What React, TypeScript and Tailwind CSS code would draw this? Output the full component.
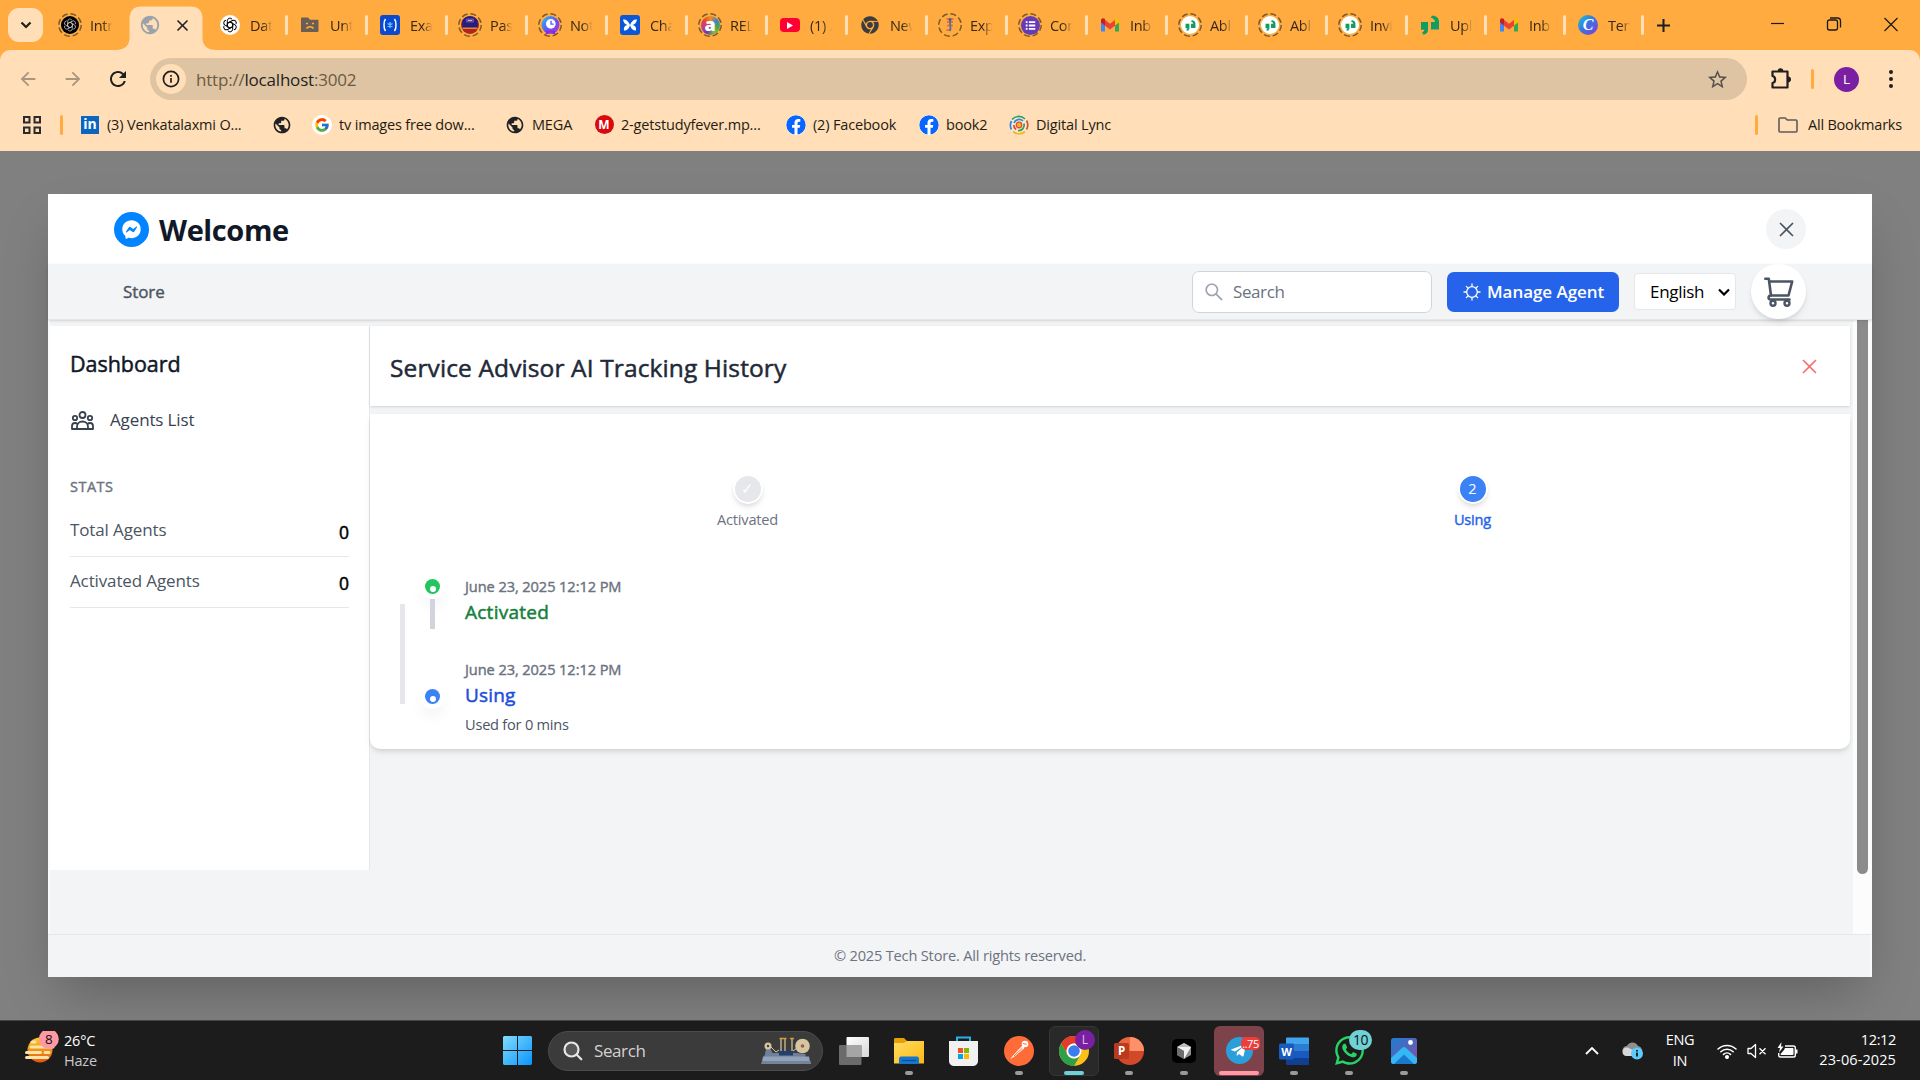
import type { ReactNode } from "react";
import { AiOutlineClose, AiOutlineSearch } from "react-icons/ai";
import { FaChrome, FaFacebook, FaFacebookMessenger, FaTelegramPlane, FaWhatsapp } from "react-icons/fa";
import { FcGoogle } from "react-icons/fc";
import { MdArrowBack, MdArrowForward, MdClose, MdPublic, MdRefresh, MdStarBorder } from "react-icons/md";

/* ---------- favicons ---------- */

function Knot({ className }: { className: string }) {
  return (
    <svg viewBox="0 0 24 24" className={className} fill="none" stroke="currentColor" strokeWidth="1.5">
      {[0, 60, 120, 180, 240, 300].map((a) => (
        <path key={a} transform={`rotate(${a} 12 12)`} d="M12 7.2 8 9.5V5.6a4 4 0 0 1 7.2-2.2M8 9.5v5" />
      ))}
    </svg>
  );
}

function Ringed({ children }: { children: ReactNode }) {
  return (
    <span className="relative flex size-6 items-center justify-center">
      <svg viewBox="0 0 24 24" className="absolute inset-0 size-6" fill="none" stroke="#7d5a2e" strokeWidth="1.5">
        <circle cx="12" cy="12" r="11.2" strokeDasharray="6 2.8" />
      </svg>
      {children}
    </span>
  );
}

function Gmail() {
  return (
    <svg viewBox="0 0 20 20" className="size-5">
      <path d="M1 4.5v12h4V7.6L1 4.5Z" fill="#4285f4" />
      <path d="M19 4.5v12h-4V7.6L19 4.5Z" fill="#34a853" />
      <path d="M4.8 4.8 10 8.800l5.200-4v5.700L10 14.600l-5.200-4.100V4.800Z" fill="#ea4335" />
      <path d="M1 5.4c0-2.300 2.200-2.900 4-1.400v6.600L1 7.600V5.400Z" fill="#c5221f" />
      <path d="M19 5.400c0-2.300-2.200-2.900-4-1.400v6.600l4-3V5.400Z" fill="#fbbc04" />
    </svg>
  );
}

function Quote({ className }: { className: string }) {
  return (
    <svg viewBox="0 0 20 20" className={className} fill="#0f9d62">
      <path d="M1 7h7v7.500c0 3-1.500 4.500-4.500 5.200l-1.500-2.200c1.600-.6 2.300-1.400 2.300-2.700H1V7Z" />
      <path d="M10.500 2.500 12.500.4C16.500.8 19 3 19 7v7.500h-8V7h4c0-2.300-1.600-3.800-4.500-4.500Z" />
    </svg>
  );
}

function QuoteCircle() {
  return (
    <Ringed>
      <span className="flex size-[18px] items-center justify-center rounded-full bg-white">
        <Quote className="size-[11px]" />
      </span>
    </Ringed>
  );
}

const intro = (
  <Ringed>
    <span className="flex size-[18px] items-center justify-center rounded-full bg-black text-[#bbb]">
      <Knot className="size-[14px]" />
    </span>
  </Ringed>
);
const chatgpt = (
  <span className="flex size-5 items-center justify-center rounded-full bg-white text-black">
    <Knot className="size-[16px]" />
  </span>
);
const sadFolder = (
  <svg viewBox="0 0 20 20" className="size-5" fill="#6a5f52">
    <path d="M2 2.500h6l2 2.200h7.500c.6 0 1 .4 1 1V16c0 .6-.4 1-1 1H2c-.6 0-1-.4-1-1V3.500c0-.6.4-1 1-1Z" />
    <path d="M6 8.500h2M12 8.500h2M6.500 13.500c1.500-2.500 5.500-2.500 7 0" stroke="#ffab40" strokeWidth="1.500" fill="none" />
  </svg>
);
const examly = (
  <svg viewBox="0 0 20 20" className="size-5">
    <rect width="20" height="20" rx="3" fill="#0a49d0" />
    <path d="M5.500 4c-2 2.500-2 9.500 0 12M14.500 4c2 2.500 2 9.500 0 12" fill="none" stroke="#fff" strokeWidth="1.500" />
    <path d="M10 7v6M7.500 8.500l5 3M12.500 8.500l-5 3" stroke="#5ec3ff" strokeWidth="1.400" />
  </svg>
);
const passport = (
  <Ringed>
    <svg viewBox="0 0 18 18" className="size-[18px]">
      <circle cx="9" cy="9" r="9" fill="#b3241c" />
      <path d="M1.300 4.500a9 9 0 0 1 15.400 0V12H1.300V4.500Z" fill="#261e7d" />
      <path d="M5 2.500h8v4H5z" fill="#5a4fb0" />
      <path d="M7 4h4v1H7z" fill="#ffb057" />
      <path d="M1.500 11.500h15V13h-15z" fill="#e8862e" />
    </svg>
  </Ringed>
);
const clock = (
  <Ringed>
    <svg viewBox="0 0 18 18" className="size-[19px]">
      <defs>
        <linearGradient id="clock" x1="0" y1="0" x2="1" y2="1">
          <stop offset="0" stopColor="#1ac9f5" />
          <stop offset=".55" stopColor="#6a4df5" />
          <stop offset="1" stopColor="#b432e6" />
        </linearGradient>
      </defs>
      <circle cx="9" cy="8.500" r="8.500" fill="url(#clock)" />
      <path d="m5 14-1 4 3-1.200L9 15l2 1.800L14 18l-1-4Z" fill="#8a2bd8" />
      <circle cx="9.300" cy="7.500" r="4.600" fill="#fff" />
      <path d="M9.500 4.500v3.200H12" stroke="#5b5cf0" strokeWidth="1.300" fill="none" />
    </svg>
  </Ringed>
);
const butterfly = (
  <svg viewBox="0 0 20 20" className="size-5">
    <rect width="20" height="20" rx="3" fill="#0b57d8" />
    <path d="M10 10C8.500 6 6 4 3 4.500c.5 3 2 5 4.500 5.500C5 10.500 3.500 12 4 15.500c3 0 5-1.500 6-5.500ZM10 10c1.500-4 4-6 7-5.500-.5 3-2 5-4.500 5.500 2.500.5 4 2 3.500 5.500-3 0-5-1.500-6-5.500Z" fill="#fff" />
  </svg>
);
const rel = (
  <Ringed>
    <span className="flex size-[19px] items-center justify-center rounded-full bg-[conic-gradient(#ef8f1d,#3b83d6,#48a948,#7ebd3f,#6a3da8,#c23a9c,#e2442f,#ef8f1d)]">
      <span className="-mt-[3px] text-[18px] leading-none font-extrabold text-white">a</span>
    </span>
  </Ringed>
);
const youtube = (
  <span className="flex h-[14px] w-5 items-center justify-center rounded-[4px] bg-[#ff0033]">
    <svg viewBox="0 0 6 7" className="h-[7px] w-[6px]" fill="#fff">
      <path d="m0 0 6 3.500L0 7Z" />
    </svg>
  </span>
);
const figure = (
  <Ringed>
    <svg viewBox="0 0 18 18" className="size-[18px]">
      <path d="M5.500 3h7M6 6h6M6 9.500h6M5.500 14h4" stroke="#f0703a" strokeWidth="2" />
      <path d="M9.500 4c-1.500 3 1 7-.5 11" stroke="#4b70a8" strokeWidth="1.800" fill="none" />
      <circle cx="9" cy="3.500" r="1.500" fill="#3d62a0" />
    </svg>
  </Ringed>
);
const forms = (
  <Ringed>
    <svg viewBox="0 0 18 18" className="size-[19px]">
      <circle cx="9" cy="9" r="9" fill="#673ab7" />
      <path d="M4.500 5.800h1.700M7.500 5.800h6M4.500 9h1.700M7.500 9h6M4.500 12.200h1.700M7.500 12.200h6" stroke="#fff" strokeWidth="1.700" />
    </svg>
  </Ringed>
);
const canva = (
  <span className="flex size-5 items-center justify-center rounded-full bg-linear-to-br from-[#0fc4cf] via-[#3a6fe0] to-[#7a2ce6]">
    <span className="-mt-px font-['Liberation_Serif',serif] text-[16px] leading-none font-bold text-white italic">C</span>
  </span>
);

const tabs: { title: string; icon: ReactNode; width?: string }[] = [
  { title: "Dat", icon: chatgpt },
  { title: "Unt", icon: sadFolder },
  { title: "Exa", icon: examly },
  { title: "Pas", icon: passport },
  { title: "Not", icon: clock },
  { title: "Cha", icon: butterfly },
  { title: "REL", icon: rel },
  { title: "(1) .", icon: youtube },
  { title: "New", icon: <FaChrome className="size-[18px] text-[#3a3c40]" /> },
  { title: "Exp", icon: figure },
  { title: "Con", icon: forms },
  { title: "Inb", icon: <Gmail /> },
  { title: "Abl", icon: <QuoteCircle /> },
  { title: "Abl", icon: <QuoteCircle /> },
  { title: "Invi", icon: <QuoteCircle /> },
  { title: "Upl", icon: <Quote className="size-5" />, width: "w-[79px]" },
  { title: "Inb", icon: <Gmail />, width: "w-[79px]" },
  { title: "Ten", icon: canva, width: "w-[78px]" },
];

function TabBody({ title, icon }: { title: string; icon: ReactNode }) {
  return (
    <>
      <span className="ml-3 flex size-6 shrink-0 items-center justify-center">{icon}</span>
      <span className="mt-px ml-2 w-[23px] overflow-hidden [mask-image:linear-gradient(to_right,black_55%,transparent_98%)] text-[14.5px] tracking-[-0.3px] whitespace-nowrap text-[#33281a]">
        {title}
      </span>
    </>
  );
}

function TabStrip() {
  return (
    <div className="flex h-[50px] items-center bg-[#ffab40]">
      <div className="ml-2 flex h-[34px] w-[35px] items-center justify-center rounded-[11px] bg-[#ffdeb8]">
        <svg viewBox="0 0 12 8" className="h-2 w-3" fill="none" stroke="#1f1f1f" strokeWidth="2.200">
          <path d="m1.500 1.500 4.500 4.500 4.500-4.500" />
        </svg>
      </div>
      <div className="ml-[3px] flex w-20 items-center">
        <TabBody title="Intr" icon={intro} />
      </div>
      <div className="flex h-[50px] w-20 items-end">
        <svg viewBox="0 0 100 44" className="-mx-[10px] h-11 w-[100px] shrink-0" fill="#ffdeb8">
          <path d="M0 44c8 0 13.500-4 13.500-12V13c0-8 4-12.500 12-12.500h49c8 0 12 4.500 12 12.500v19c0 8 5.500 12 13.500 12Z" />
        </svg>
        <div className="-ml-20 flex h-[50px] w-20 shrink-0 items-center">
          <MdPublic className="relative ml-[13px] size-[22px] shrink-0 text-[#9aa3ab]" />
          <MdClose className="relative ml-[12px] size-[19px] shrink-0 stroke-[#1f1f1f] text-[#1f1f1f]" />
        </div>
      </div>
      {tabs.map((t, i) => (
        <div key={i} className={`flex shrink-0 items-center ${t.width ?? "w-20"}`}>
          <TabBody title={t.title} icon={t.icon} />
          <span className="-mr-[2px] ml-auto h-5 w-[3px] shrink-0 rounded-full bg-[#ffdeb8]" />
        </div>
      ))}
      <svg viewBox="0 0 14 14" className="ml-[15px] size-[13px]" stroke="#1f1f1f" strokeWidth="2.200">
        <path d="M7 0v14M0 7h14" />
      </svg>
      <div className="ml-auto flex w-[171px] shrink-0 text-[#1a1a1a]">
        <svg viewBox="0 0 57 50" className="h-[50px] w-[57px]" stroke="currentColor" strokeWidth="1.200">
          <path d="M22 23.500h13" />
        </svg>
        <svg viewBox="0 0 57 50" className="h-[50px] w-[57px]" fill="none" stroke="currentColor" strokeWidth="1.300">
          <rect x="21.500" y="20" width="10" height="10" rx="2" />
          <path d="M24 18h7.500a3 3 0 0 1 3 3V27.500" />
        </svg>
        <svg viewBox="0 0 57 50" className="h-[50px] w-[57px]" stroke="currentColor" strokeWidth="1.200">
          <path d="m21.500 18 13 13M34.500 18l-13 13" />
        </svg>
      </div>
    </div>
  );
}

function AddressRow() {
  return (
    <div className="flex h-[58px] items-center rounded-t-[10px] bg-[#ffdeb8]">
      <MdArrowBack className="ml-[17px] size-[22px] text-[#a9967d]" />
      <MdArrowForward className="ml-[23px] size-[22px] text-[#a9967d]" />
      <MdRefresh className="ml-[22px] size-[24px] text-[#1f1f1f]" />
      <div className="ml-[20px] flex h-[42px] w-[1597px] items-center rounded-full bg-[#dec4a2]">
        <span className="ml-[6px] flex size-[30px] items-center justify-center rounded-full bg-[#ffdeb8]">
          <svg viewBox="0 0 18 18" className="size-[18px]" fill="none" stroke="#1f1f1f" strokeWidth="1.700">
            <circle cx="9" cy="9" r="7.600" />
            <path d="M9 8v4.800M9 5v1.700" />
          </svg>
        </span>
        <span className="mt-px ml-[10px] text-[17px] tracking-[-0.200px] whitespace-nowrap text-[#6b5a45]">
          http://<span className="text-[#1f1f1f]">localhost</span>:3002
        </span>
        <MdStarBorder className="mr-[18px] ml-auto size-[23px] text-[#55524e]" />
      </div>
      <svg viewBox="0 0 24 24" className="ml-[22px] size-6" fill="none" stroke="#1f1f1f" strokeWidth="2.200" strokeLinejoin="round">
        <path d="M3.500 4.500H18.500V20.500H3.500V16c3.500-.6 3.500-6.400 0-7Z" />
        <path d="M9.500 4a2 2 0 0 1 4 0M19 10.300a2.200 2.200 0 0 1 0 4.400" fill="#1f1f1f" stroke="#1f1f1f" strokeWidth="1.600" />
      </svg>
      <span className="ml-[18px] h-5 w-[3px] rounded-full bg-[#ffab40]" />
      <span className="ml-5 flex size-[25px] items-center justify-center rounded-full bg-[#7b1fa2] text-[13.500px] text-white">L</span>
      <svg viewBox="0 0 4 18" className="ml-[30px] h-[18px] w-1" fill="#1f1f1f">
        <circle cx="2" cy="2" r="2" />
        <circle cx="2" cy="9" r="2" />
        <circle cx="2" cy="16" r="2" />
      </svg>
    </div>
  );
}

function Bookmark({ icon, label, className }: { icon: ReactNode; label?: string; className: string }) {
  return (
    <div className={`flex shrink-0 items-center ${className}`}>
      <span className="flex size-5 shrink-0 items-center justify-center">{icon}</span>
      {label && <span className="ml-[7px] text-[14.500px] tracking-[-0.170px] whitespace-nowrap text-[#241c12]">{label}</span>}
    </div>
  );
}

function BookmarkRow() {
  return (
    <div className="flex h-[43px] items-center bg-[#ffdeb8] pb-[10px]">
      <svg viewBox="0 0 18 18" className="ml-[23px] size-[18px]" fill="none" stroke="#2b2b2b" strokeWidth="2">
        <path d="M1 1h5.500v5.500H1ZM11.500 1H17v5.500h-5.500ZM1 11.500h5.500V17H1ZM11.500 11.500H17V17h-5.500Z" />
      </svg>
      <span className="ml-[19px] h-5 w-[3px] rounded-full bg-[#ffab40]" />
      <Bookmark
        className="ml-[17px] w-[192px]"
        label="(3) Venkatalaxmi O..."
        icon={<span className="flex size-[18px] items-center justify-center bg-[#0a66c2] pb-px text-[14px] leading-none font-bold text-white">in</span>}
      />
      <Bookmark className="w-10" icon={<MdPublic className="size-[22px] text-[#202124]" />} />
      <Bookmark
        className="w-[193px]"
        label="tv images free dow..."
        icon={
          <span className="flex size-5 items-center justify-center rounded-full bg-white">
            <FcGoogle className="size-4" />
          </span>
        }
      />
      <Bookmark className="w-[89px]" label="MEGA" icon={<MdPublic className="size-[22px] text-[#202124]" />} />
      <Bookmark
        className="w-[192px]"
        label="2-getstudyfever.mp..."
        icon={<span className="flex size-[19px] items-center justify-center rounded-full bg-[#d9090f] text-[12px] font-bold text-white">M</span>}
      />
      <Bookmark className="w-[133px]" label="(2) Facebook" icon={<FaFacebook className="size-5 rounded-full bg-white text-[#0866ff]" />} />
      <Bookmark className="w-[90px]" label="book2" icon={<FaFacebook className="size-5 rounded-full bg-white text-[#0866ff]" />} />
      <Bookmark
        className="w-[110px]"
        label="Digital Lync"
        icon={
          <svg viewBox="0 0 20 20" className="size-5" fill="none" strokeWidth="1.700">
            <circle cx="10" cy="10" r="10" fill="#f7e9cf" />
            <path d="M3 4.500a9 9 0 0 1 13-.5" stroke="#2f9e57" />
            <path d="M17.500 5.500a9 9 0 0 1 0 9" stroke="#e5433d" />
            <path d="M16 16.500a9 9 0 0 1-12 0" stroke="#f4b51e" />
            <path d="M2.500 14.500a9 9 0 0 1 0-8.500" stroke="#3187d6" />
            <path d="M5 8a5.500 5.500 0 0 1 9-2" stroke="#3187d6" />
            <path d="M15 8.500a5.500 5.500 0 0 1-6 7" stroke="#2f9e57" />
            <path d="M7 14.500A5.500 5.500 0 0 1 4.800 10" stroke="#e5433d" />
            <circle cx="10" cy="10" r="2.800" fill="#f4b51e" stroke="#e5433d" strokeWidth="1.200" />
          </svg>
        }
      />
      <span className="mr-5 ml-auto h-5 w-[3px] shrink-0 rounded-full bg-[#ffab40]" />
      <svg viewBox="0 0 20 16" className="h-4 w-5 shrink-0" fill="none" stroke="#5c5c5c" strokeWidth="1.600" strokeLinejoin="round">
        <path d="M1 2.200C1 1.500 1.500 1 2.200 1h5l2 2h8.600c.7 0 1.200.5 1.200 1.200v9.600c0 .7-.5 1.200-1.200 1.200H2.200C1.500 15 1 14.500 1 13.800Z" />
      </svg>
      <span className="mr-[18px] ml-[10px] text-[14.500px] tracking-[-0.200px] whitespace-nowrap text-[#241c12]">All Bookmarks</span>
    </div>
  );
}

/* ---------- store window ---------- */

function GearIcon() {
  return (
    <svg viewBox="0 0 18 18" className="size-[18px]" fill="none" stroke="currentColor" strokeWidth="1.300" strokeLinecap="round">
      <circle cx="9" cy="9" r="5.300" />
      {[0, 45, 90, 135, 180, 225, 270, 315].map((a) => (
        <path key={a} d="M9 3.200V1" transform={`rotate(${a} 9 9)`} />
      ))}
    </svg>
  );
}

function PeopleIcon() {
  return (
    <svg viewBox="0 0 23 19" className="h-[19px] w-[23px]" fill="none" stroke="currentColor" strokeWidth="1.800" strokeLinejoin="round">
      <circle cx="11.500" cy="4" r="3" />
      <circle cx="4" cy="7" r="2.200" />
      <circle cx="19" cy="7" r="2.200" />
      <path d="M6 18v-2.200c0-3.200 2.400-5.300 5.500-5.300s5.500 2.100 5.500 5.300V18Z" />
      <path d="M6 18H1v-2.800c0-2 1.300-3.200 3-3.200 1 0 1.900.4 2.500 1.100M17 18h5v-2.800c0-2-1.300-3.200-3-3.200-1 0-1.900.4-2.500 1.100" />
    </svg>
  );
}

function CartIcon() {
  return (
    <svg viewBox="0 0 30 30" className="size-[30px]" fill="none" stroke="currentColor" strokeWidth="2.600" strokeLinejoin="round" strokeLinecap="round">
      <path d="M1.300 1.800h3.500L7 18.500" />
      <path d="M5.300 4.500h22.900l-3.700 14H7c-3 0-3.300 4-.5 4h19" />
      <circle cx="9" cy="26.300" r="2.500" strokeWidth="2.400" />
      <circle cx="23" cy="26.300" r="2.500" strokeWidth="2.400" />
    </svg>
  );
}

function Header() {
  return (
    <header className="flex h-[70px] shrink-0 items-center justify-between bg-white pr-[66px] pl-[66px]">
      <div className="flex items-center">
        <span className="flex size-[35px] items-center justify-center rounded-full bg-[#0084ff] text-white">
          <FaFacebookMessenger className="size-[19px]" />
        </span>
        <h1 className="ml-[10px] text-[29px] leading-none font-bold tracking-[-0.400px] text-[#111827]">Welcome</h1>
      </div>
      <button className="flex size-10 items-center justify-center rounded-full bg-[#f3f4f6] text-[#4b5563]">
        <AiOutlineClose className="size-[21px]" />
      </button>
    </header>
  );
}

function NavBar() {
  return (
    <nav className="relative z-10 flex h-[56px] shrink-0 items-center border-b border-[#e5e7eb] bg-[#f3f4f6] pr-[66px] pl-[75px] shadow-sm">
      <a className="text-[17px] [-webkit-text-stroke:0.4px] tracking-[-0.100px] text-[#4b5563]">Store</a>
      <div className="ml-auto flex h-[42px] w-[240px] items-center rounded-[7px] border border-[#d1d5db] bg-white">
        <AiOutlineSearch className="ml-[10px] size-[22px] text-[#9ca3af]" />
        <span className="mt-px ml-[8px] text-[17px] tracking-[-0.400px] text-[#6b7280]">Search</span>
      </div>
      <button className="ml-[15px] flex h-10 w-[172px] items-center rounded-[7px] bg-[#2563eb] text-white">
        <span className="ml-4">
          <GearIcon />
        </span>
        <span className="mt-px ml-[6px] text-[17px] font-semibold tracking-[-0.050px] whitespace-nowrap">Manage Agent</span>
      </button>
      <div className="ml-[15px] flex h-[37px] w-[102px] items-center rounded-[4px] border border-[#e5e7eb] bg-white">
        <span className="mt-px ml-[15px] text-[17px] tracking-[-0.300px] text-black">English</span>
        <svg viewBox="0 0 12 8" className="ml-[14px] h-[8px] w-[12px]" fill="none" stroke="#000" strokeWidth="2.200">
          <path d="m1 1.500 5 5 5-5" />
        </svg>
      </div>
      <button className="ml-[15px] flex size-[55px] items-center justify-center rounded-full bg-white text-[#4b5563] shadow-md">
        <CartIcon />
      </button>
    </nav>
  );
}

function Stat({ label, value }: { label: string; value: string }) {
  return (
    <div className="flex h-[51px] items-center justify-between border-b border-[#e5e7eb]">
      <span className="-mt-[2px] text-[17px] tracking-[-0.130px] text-[#4b5563]">{label}</span>
      <span className="mt-[2px] text-[17.500px] [-webkit-text-stroke:0.5px] text-black">{value}</span>
    </div>
  );
}

function Sidebar() {
  return (
    <aside className="h-[544px] w-[320px] shrink-0 border-r border-[#e5e7eb] bg-white pr-[20px] pl-5">
      <h2 className="pt-[25px] text-[21.500px] leading-[26px] [-webkit-text-stroke:0.5px] tracking-[-0.050px] text-[#111827]">Dashboard</h2>
      <div className="mt-[30px] flex h-[26px] items-center pl-px text-[#374151]">
        <PeopleIcon />
        <span className="ml-[16px] text-[17px] tracking-[-0.130px]">Agents List</span>
      </div>
      <h3 className="mt-[44px] text-[14.500px] leading-[20px] [-webkit-text-stroke:0.4px] tracking-[0.500px] text-[#6b7280]">STATS</h3>
      <div className="mt-[9px]">
        <Stat label="Total Agents" value="0" />
        <Stat label="Activated Agents" value="0" />
      </div>
    </aside>
  );
}

function Step({ mark, label, circle, text }: { mark: string; label: string; circle: string; text: string }) {
  return (
    <div className="flex flex-1 flex-col items-center">
      <span className={`flex size-[30px] items-center justify-center rounded-full border-2 border-white text-[14.500px] text-white shadow-md ${circle}`}>
        {mark}
      </span>
      <span className={`mt-[5px] text-[14.600px] leading-5 tracking-[-0.200px] ${text}`}>{label}</span>
    </div>
  );
}

function TimelineDot({ color }: { color: string }) {
  return (
    <span className="flex size-[25px] items-center justify-center rounded-full bg-white shadow-[0_10px_15px_-3px_rgba(0,0,0,0.06)]">
      <span className={`flex size-[15px] items-center justify-center rounded-full ${color}`}>
        <span className="mt-[4px] size-[6px] rounded-full bg-white" />
      </span>
    </span>
  );
}

function TimelineDate() {
  return (
    <time className="text-[14.600px] leading-5 [-webkit-text-stroke:0.4px] tracking-[-0.080px] text-[#6b7280]">June 23, 2025 12:12 PM</time>
  );
}

function TrackingCard() {
  return (
    <section className="mt-[8px] h-[335px] rounded-b-[10px] bg-white pt-[60px] shadow-md">
      <div className="flex px-[15px]">
        <Step mark="✓" label="Activated" circle="bg-[#e5e7eb]" text="text-[#6b7280]" />
        <Step mark="2" label="Using" circle="bg-[#3b82f6]" text="text-[#2563eb] [-webkit-text-stroke:0.4px]" />
      </div>
      <div className="mt-[45px] flex pl-[30px]">
        <span className="mt-[30px] h-[100px] w-[5px] bg-[#e5e7eb]" />
        <div className="ml-[15px] flex w-[25px] flex-col items-center">
          <TimelineDot color="bg-[#22c55e]" />
          <span className="h-[30px] w-[5px] bg-[#d1d5db]" />
          <span className="h-[55px]" />
          <TimelineDot color="bg-[#3b82f6]" />
        </div>
        <div className="ml-[20px] flex flex-col pt-[2px]">
          <TimelineDate />
          <h4 className="mt-[4px] mb-[35px] text-[19px] leading-6 [-webkit-text-stroke:0.5px] tracking-[0.250px] text-[#15803d]">Activated</h4>
          <TimelineDate />
          <h4 className="mt-[4px] text-[19px] leading-6 [-webkit-text-stroke:0.5px] tracking-[0.150px] text-[#1d4ed8]">Using</h4>
          <p className="mt-[7px] text-[14.600px] leading-5 tracking-[-0.230px] text-[#4b5563]">Used for 0 mins</p>
        </div>
      </div>
    </section>
  );
}

function StoreWindow() {
  return (
    <div className="flex h-[783px] w-[1824px] flex-col bg-[#f3f4f6] shadow-2xl">
      <Header />
      <NavBar />
      <div className="flex h-[614px] shrink-0">
        <div className="flex w-[1805px] border-l-2 border-[#f9fafb] pt-[6px] pr-[3px]">
          <Sidebar />
          <main className="flex-1">
            <div className="flex h-20 items-center justify-between bg-white pr-[30px] pl-[20px] shadow-sm">
              <h2 className="mt-1 text-[24.500px] [-webkit-text-stroke:0.5px] tracking-[0.120px] whitespace-nowrap text-[#1f2937]">
                Service Advisor AI Tracking History
              </h2>
              <AiOutlineClose className="mt-px size-[21px] text-[#f87171]" />
            </div>
            <TrackingCard />
          </main>
        </div>
        <div className="w-[19px] bg-[#fcfcfc] pl-1">
          <div className="h-[554px] w-[11px] rounded-b-full bg-[#8b8b8b]" />
        </div>
      </div>
      <footer className="flex h-[43px] items-center justify-center border-t border-r-2 border-t-[#e5e7eb] border-r-[#f9fafb] pl-[2px] text-[14.600px] tracking-[-0.180px] text-[#6b7280]">
        © 2025 Tech Store. All rights reserved.
      </footer>
    </div>
  );
}

/* ---------- taskbar ---------- */

function TaskApp({ children, indicator = "bg-[#9a9a9a] w-2", tile = "" }: { children: ReactNode; indicator?: string; tile?: string }) {
  return (
    <div className={`relative mr-[5px] flex size-[50px] shrink-0 items-center justify-center rounded-[6px] ${tile}`}>
      {children}
      <span className={`absolute bottom-[1px] left-1/2 h-1 -translate-x-1/2 rounded-full ${indicator}`} />
    </div>
  );
}

function Weather() {
  return (
    <div className="flex w-[503px] shrink-0 items-center">
      <svg viewBox="0 0 36 40" className="ml-6 h-10 w-9 shrink-0">
        <defs>
          <linearGradient id="sun" x1="0" y1="0" x2="0" y2="1">
            <stop offset="0" stopColor="#ffce1f" />
            <stop offset="1" stopColor="#e2560c" />
          </linearGradient>
        </defs>
        <circle cx="16" cy="19" r="12.500" fill="url(#sun)" />
        <path d="M8 11h3M7 16h22M2.500 21.500h14M21 21.500h4M2.500 26.500h21" stroke="#fbe3ab" strokeWidth="3" strokeLinecap="round" />
        <circle cx="24.800" cy="8" r="10" fill="#ff99a4" />
        <text x="24.800" y="13" textAnchor="middle" fontSize="13.500" fill="#111">8</text>
      </svg>
      <div className="ml-[4px] flex flex-col text-[14.500px] leading-5 tracking-[-0.200px]">
        <span className="text-white">26°C</span>
        <span className="text-[#c8c8c8]">Haze</span>
      </div>
    </div>
  );
}

function SearchPill() {
  return (
    <div className="ml-4 flex h-10 w-[275px] shrink-0 items-center rounded-full border border-[#4c4c4c] bg-[#3b3b3b]">
      <svg viewBox="0 0 20 20" className="ml-[14px] size-5" fill="none" stroke="#e6e6e6" strokeWidth="2.200" strokeLinecap="round">
        <circle cx="8.500" cy="8.500" r="7" fill="#575757" />
        <path d="m13.800 13.800 4.500 4.500" />
      </svg>
      <span className="ml-[11px] text-[17px] tracking-[-0.400px] text-[#d2d2d2]">Search</span>
      <svg viewBox="0 0 50 28" className="mr-[11px] ml-auto h-7 w-[50px]">
        <path d="M4 17 5.500 9l3 1 3 6h24l9 1v3H3Z" fill="#6f809b" />
        <path d="M2 19.500h46l1.500 7.500H.5Z" fill="#93a2b8" />
        <path d="M1 24h48.500l.5 3H.5Z" fill="#73849d" />
        <path d="M18 13.500h14v5H18Z" fill="#24406b" />
        <path d="M20 2v12M24 2v12M31 2v12" stroke="#c9b58d" strokeWidth="1.400" />
        <path d="M18.500 1.500h7M29 1.500h4" stroke="#d59a3a" strokeWidth="1.500" />
        <circle cx="41.500" cy="9" r="7.300" fill="#d8c59f" />
        <circle cx="41.500" cy="9" r="1.800" fill="#8f5d52" />
        <circle cx="7" cy="9" r="3.500" fill="#d8c59f" />
        <circle cx="7" cy="9" r="1.200" fill="#4a3b2c" />
        <path d="m10 10 5 5 3-2M32 14l4-3" stroke="#d8c59f" strokeWidth="1" fill="none" />
      </svg>
    </div>
  );
}

function Taskbar() {
  return (
    <div className="flex h-[60px] items-center border-t border-[#454545] bg-[#1c1c1c]">
      <Weather />
      <svg viewBox="0 0 29 29" className="size-[29px] shrink-0">
        <defs>
          <linearGradient id="win" x1="0" y1="0" x2="1" y2="1">
            <stop offset="0" stopColor="#80dcff" />
            <stop offset="1" stopColor="#0a94fb" />
          </linearGradient>
        </defs>
        <path d="M1 0h13v14H0V1ZM15 0h13l1 1v13H15ZM0 15h14v14H1l-1-1ZM15 15h14v13l-1 1H15Z" fill="url(#win)" />
      </svg>
      <SearchPill />
      <div className="ml-[6px] flex shrink-0">
        <TaskApp indicator="hidden">
          <svg viewBox="0 0 30 30" className="size-[30px]">
            <defs>
              <linearGradient id="tv" x1="0" y1="0" x2="1" y2="1">
                <stop offset="0" stopColor="#fff" />
                <stop offset="1" stopColor="#d8d8d8" />
              </linearGradient>
            </defs>
            <rect x="7.500" y="1" width="22.500" height="20" rx="1" fill="url(#tv)" />
            <rect x="0" y="9" width="22.500" height="20" rx="1" fill="#6b6b6b" />
            <path d="M7.500 9h15v12h-15Z" fill="#a5a5a5" />
          </svg>
        </TaskApp>
        <TaskApp>
          <svg viewBox="0 0 30 28" className="h-7 w-[30px]">
            <defs>
              <linearGradient id="folder" x1="0" y1="0" x2="1" y2="1">
                <stop offset="0" stopColor="#ffdc63" />
                <stop offset="1" stopColor="#fbb912" />
              </linearGradient>
            </defs>
            <path d="M0 2.500C0 1.500.7 1 1.500 1H10l3 3v4H0Z" fill="#e3a008" />
            <path d="M0 6h10l3-2h17v22.500H0Z" fill="url(#folder)" />
            <path d="M5 27V21.500c0-1 .8-2 2-2h16c1.200 0 2 1 2 2V27Z" fill="#1576cf" />
            <path d="M8 23.500h14" stroke="#0b4d94" strokeWidth="1.200" />
          </svg>
        </TaskApp>
        <TaskApp indicator="hidden">
          <svg viewBox="0 0 29 30" className="mr-px h-[30px] w-[29px]">
            <path d="M8 6V1.500h13V6" fill="none" stroke="#27b1ea" strokeWidth="2" />
            <path d="M0 5h29v20c0 2.800-2.200 5-5 5H5c-2.800 0-5-2.200-5-5Z" fill="#f1f1f1" />
            <path d="M9 12h5v5H9Z" fill="#f25022" />
            <path d="M15 12h5v5h-5Z" fill="#7fba00" />
            <path d="M9 18h5v5H9Z" fill="#00a4ef" />
            <path d="M15 18h5v5h-5Z" fill="#ffb900" />
          </svg>
        </TaskApp>
        <TaskApp>
          <svg viewBox="0 0 30 30" className="size-[30px]">
            <circle cx="15" cy="15" r="15" fill="#ff6c37" />
            <path d="M6 23.500 9 19.500l8.500-9c1.500-1.500 3.500.5 2.500 2l-8.500 7.300Z" fill="#fff" />
            <circle cx="21" cy="8" r="3.300" fill="#fff" />
            <path d="m10 20 8.500-8M18.800 7.500l4 .8" stroke="#ff6c37" strokeWidth="1" />
          </svg>
        </TaskApp>
        <TaskApp tile="bg-[#292929] border border-[#353535]" indicator="bg-[#6fd0d6] w-5 -mb-px">
          <svg viewBox="0 0 30 30" className="size-[30px]">
            <circle cx="15" cy="15" r="15" fill="#fbc116" />
            <path d="M2 7.500a15 15 0 0 1 26 0H15a7.500 7.500 0 0 0-6.500 11.200Z" fill="#e33b2e" />
            <path d="M2 7.500A15 15 0 0 0 15 30l6.500-11.300a7.500 7.500 0 0 1-13 0Z" fill="#2da04a" />
            <circle cx="15" cy="15" r="7.500" fill="#fff" />
            <circle cx="15" cy="15" r="5.800" fill="#3b7ded" />
          </svg>
          <span className="absolute top-[3px] left-[25px] flex size-5 items-center justify-center rounded-full bg-[#7b1fa2] text-[12px] text-[#d9c2e6]">L</span>
        </TaskApp>
        <TaskApp>
          <svg viewBox="0 0 30 30" className="size-[30px]">
            <circle cx="16" cy="15" r="14" fill="#d2492a" />
            <path d="M16 1a14 14 0 0 1 14 14H16Z" fill="#ff9068" />
            <path d="M16 1A14 14 0 0 0 2.500 11L16 15Z" fill="#e9663f" />
            <rect y="7" width="15" height="16" rx="1.500" fill="#b93a1e" />
            <text x="7.500" y="19" textAnchor="middle" fontSize="11.500" fontWeight="700" fill="#fff">P</text>
          </svg>
        </TaskApp>
        <TaskApp>
          <svg viewBox="0 0 24 24" className="size-6">
            <rect width="24" height="24" rx="5" fill="#000" />
            <path d="m12 4 7 4v8l-7 4-7-4V8Z" fill="#8c8c8c" />
            <path d="m12 4 7 4H5Z" fill="#bdbdbd" />
            <path d="M5 8h14l-7 12V12Z" fill="#f2f2f2" />
            <path d="m5 8 7 4v8l-7-4Z" fill="#6e6e6e" />
          </svg>
        </TaskApp>
        <TaskApp tile="bg-[#7e434a]" indicator="bg-[#ff99a4] w-10">
          <span className="flex size-[27px] items-center justify-center rounded-full bg-[#2a9fda]">
            <FaTelegramPlane className="mr-[2px] size-[17px] text-white" />
          </span>
          <span className="absolute top-[11px] left-[27px] flex h-[13px] w-[19px] items-center justify-center rounded-[5px] bg-[#ef3e3a] text-[11px] leading-none tracking-[-0.500px] text-white">..75</span>
        </TaskApp>
        <TaskApp>
          <svg viewBox="0 0 30 28" className="h-7 w-[30px]">
            <path d="M7 1.500C7 1 7.500.5 8 .5h21c.5 0 1 .5 1 1V7H7Z" fill="#41a5ee" />
            <path d="M7 7h23v7H7Z" fill="#2b7cd3" />
            <path d="M7 14h23v7H7Z" fill="#185abd" />
            <path d="M7 21h23v6c0 .5-.5 1-1 1H8c-.5 0-1-.5-1-1Z" fill="#103f91" />
            <rect y="6.500" width="15" height="16" rx="1.500" fill="#185abd" />
            <text x="7.500" y="18.500" textAnchor="middle" fontSize="11" fontWeight="700" fill="#fff">W</text>
          </svg>
        </TaskApp>
        <TaskApp>
          <FaWhatsapp className="size-[33px] text-[#25d366]" />
          <span className="absolute top-[4px] left-[25px] flex h-5 w-[23px] items-center justify-center rounded-full bg-[#6fd0d6] text-[14px] leading-none tracking-[-0.400px] text-[#111]">10</span>
        </TaskApp>
        <TaskApp>
          <svg viewBox="0 0 26 26" className="size-[26px]">
            <defs>
              <linearGradient id="photo" x1="0" y1="0" x2="1" y2="1">
                <stop offset="0" stopColor="#1b7fd6" />
                <stop offset="1" stopColor="#8a4aa0" />
              </linearGradient>
            </defs>
            <rect width="26" height="26" rx="2.500" fill="url(#photo)" />
            <path d="M0 20 11 10c1.300-1.200 2.700-1.200 4 0l11 10v3.500c0 1.400-1 2.500-2.500 2.500h-21C1 26 0 25 0 23.500Z" fill="#35b7f4" />
            <path d="m3 26 10-9.500L23 26Z" fill="#1a78cf" />
            <circle cx="19.500" cy="4.500" r="2.400" fill="#fff" />
          </svg>
        </TaskApp>
      </div>
      <div className="ml-auto flex shrink-0 items-center text-white">
        <svg viewBox="0 0 14 8" className="h-2 w-[14px]" fill="none" stroke="currentColor" strokeWidth="1.800">
          <path d="m1 7 6-6 6 6" />
        </svg>
        <svg viewBox="0 0 22 18" className="ml-[23px] h-[18px] w-[22px]">
          <path d="M5 13a4.500 4.500 0 0 1 0-9A6 6 0 0 1 16 4a5 5 0 0 1 2 9Z" fill="#8f8f8f" />
          <path d="M4 14a4.300 4.300 0 0 1 .5-8.500c3 0 4 2 7.500 3v5.500Z" fill="#d8d8d8" />
          <circle cx="15" cy="11.500" r="6" fill="#5ccbff" />
          <path d="M15 10.500v4M15 8v1.500" stroke="#111" strokeWidth="1.700" />
        </svg>
        <div className="ml-[20px] flex w-[32px] flex-col items-center text-[14.500px] leading-[20.500px] tracking-[-0.300px]">
          <span>ENG</span>
          <span>IN</span>
        </div>
        <svg viewBox="0 0 20 16" className="ml-[21px] h-4 w-5" fill="none" stroke="currentColor" strokeWidth="1.500" strokeLinecap="round">
          <path d="M1 6a13 13 0 0 1 18 0M3.800 8.700a9 9 0 0 1 12.400 0M6.500 11.400a5 5 0 0 1 7 0" />
          <circle cx="10" cy="14" r="1.300" fill="currentColor" />
        </svg>
        <svg viewBox="0 0 20 16" className="ml-[10px] h-4 w-5" fill="none" stroke="currentColor" strokeWidth="1.300" strokeLinejoin="round">
          <path d="M1 5.500h3L8.500 1.500v13L4 10.500H1ZM12.500 5.200l6 6M18.500 5.200l-6 6" />
        </svg>
        <svg viewBox="0 0 21 18" className="ml-[10px] h-[18px] w-[21px]" fill="none" stroke="currentColor" strokeWidth="1.400">
          <path d="M8 4h8.500c1 0 1.800.8 1.800 1.800v7.400c0 1-.8 1.800-1.800 1.800H3.500c-1 0-1.800-.8-1.800-1.800V11" />
          <path d="M8 6h7.500c.5 0 1 .4 1 1v5c0 .6-.5 1-1 1h-11c-.5 0-1-.4-1-1L7 8Z" fill="currentColor" stroke="none" />
          <path d="M19 7.500h1.500v4H19Z" fill="currentColor" stroke="none" />
          <path d="M4.500 0 .5 6h2.500L2 10.500 6.500 4.500H4Z" fill="currentColor" stroke="none" />
        </svg>
        <div className="mr-6 ml-[19px] flex w-[79px] -translate-y-px flex-col items-end text-[14.500px] leading-5 tracking-[0.100px] whitespace-nowrap">
          <span className="tracking-[-0.350px]">12:12</span>
          <span>23-06-2025</span>
        </div>
      </div>
    </div>
  );
}

export default function App() {
  return (
    <div className="flex h-[1080px] w-[1920px] flex-col overflow-hidden bg-[#808080] font-['Open_Sans','Noto_Sans',sans-serif]">
      <div className="bg-[#ffab40]">
        <TabStrip />
        <AddressRow />
        <BookmarkRow />
      </div>
      <div className="flex flex-1 justify-center pt-[43px]">
        <StoreWindow />
      </div>
      <Taskbar />
    </div>
  );
}
